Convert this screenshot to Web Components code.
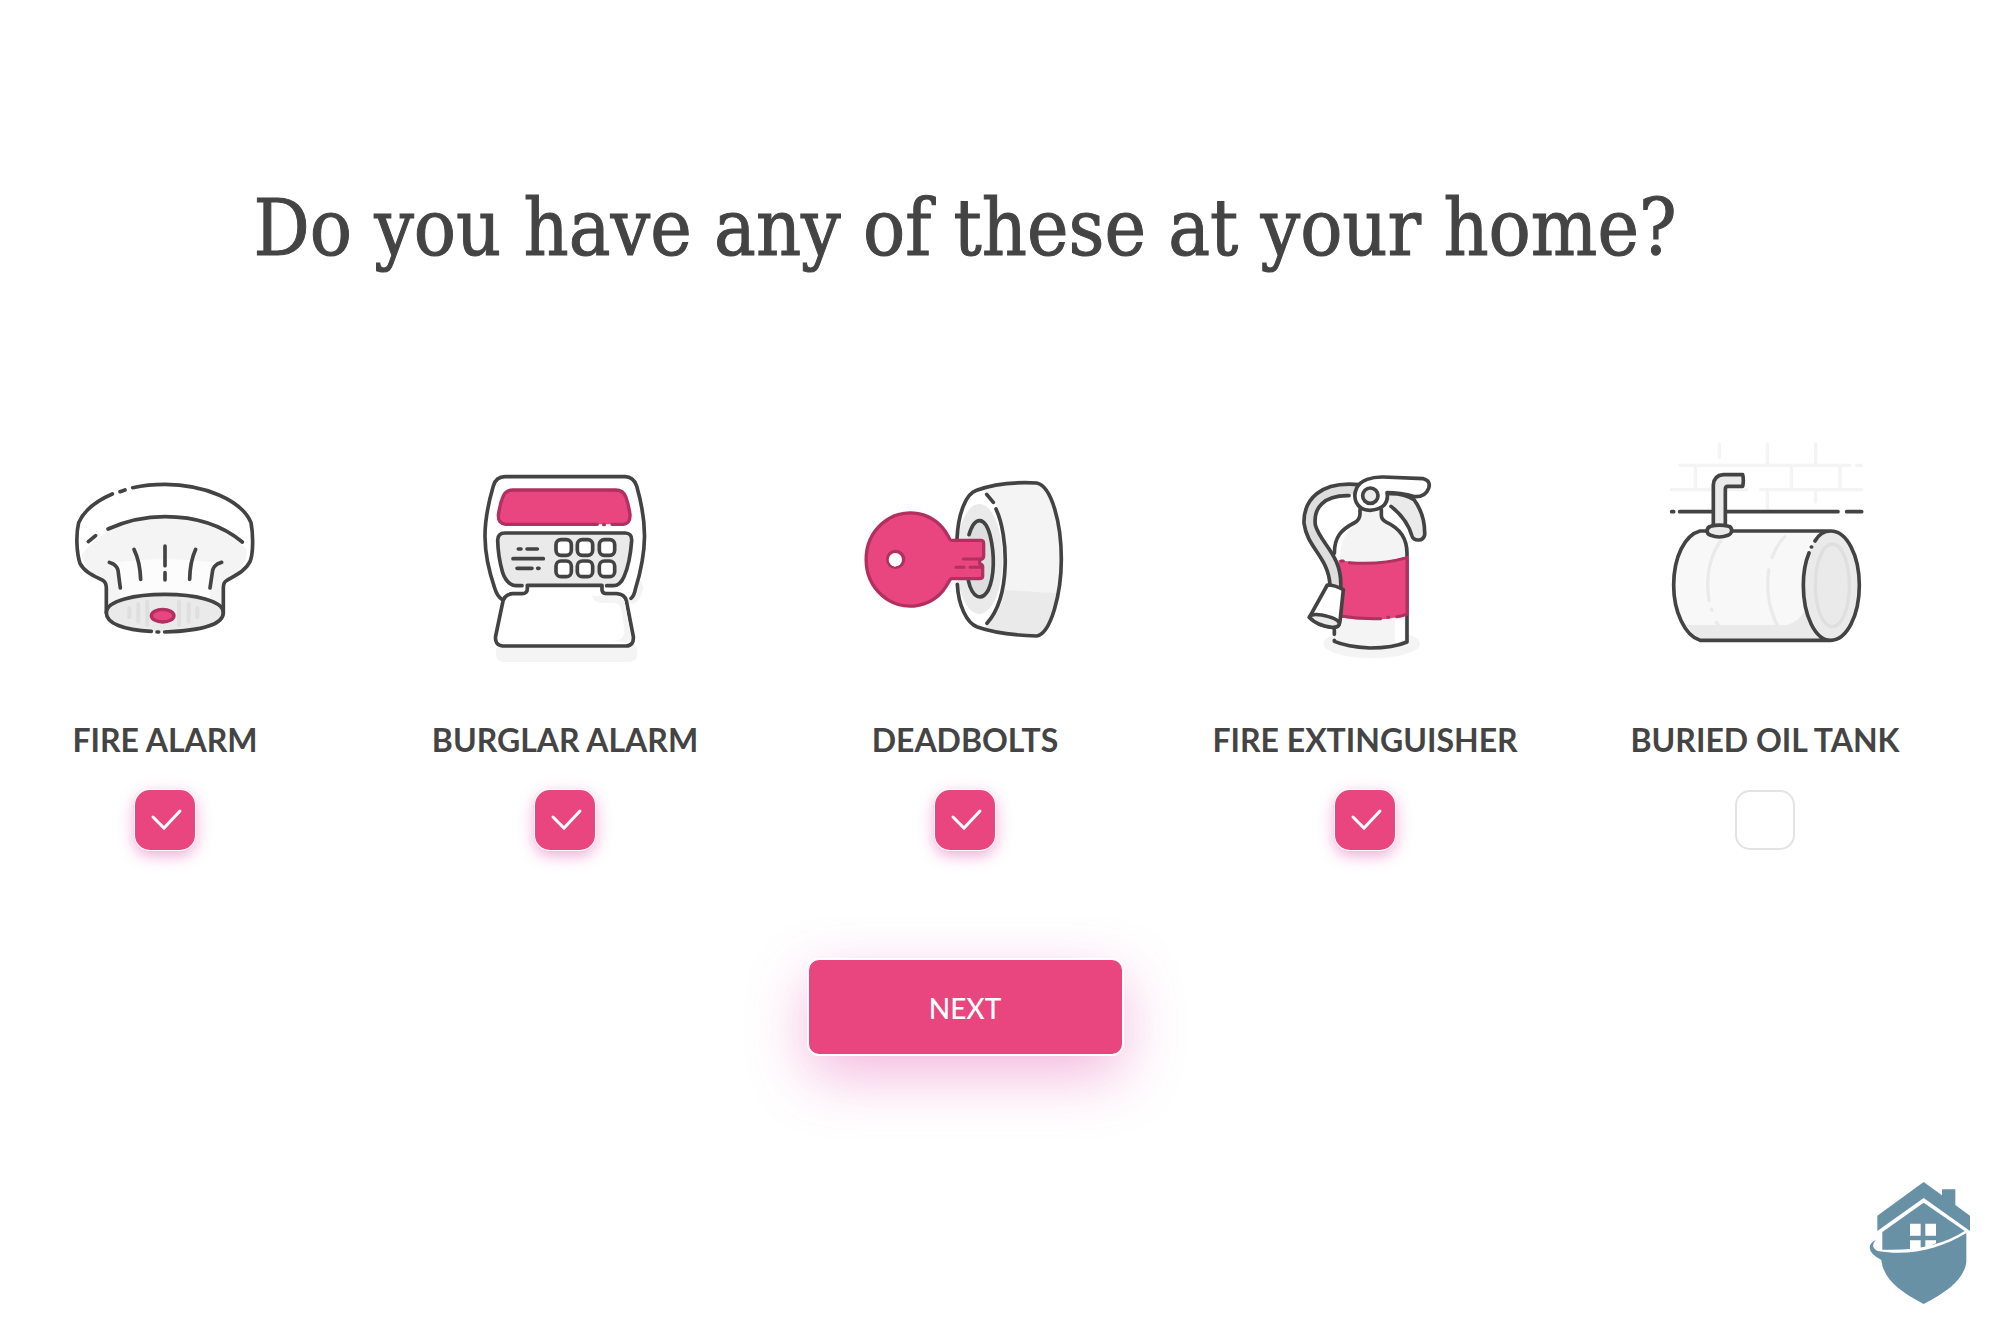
<!DOCTYPE html>
<html lang="en">
<head>
<meta charset="utf-8">
<meta name="viewport" content="width=device-width, initial-scale=1">
<title>Home safety</title>
<style>
  body {
    margin: 0;
    background: #fff;
    color: #444;
    font-family: Lato, "Open Sans", sans-serif;
    --pink: #e9457e;
    --pink-dark: #b2305f;
    --ink: #434343;
    --brand: #6991a6;
  }
</style>
</head>
<body>
<survey-page>
  <span slot="title">Do you have any of these at your home?</span>
  <survey-option checked><item-icon slot="icon" name="fire-alarm"></item-icon>FIRE ALARM</survey-option>
  <survey-option checked><item-icon slot="icon" name="burglar-alarm"></item-icon>BURGLAR ALARM</survey-option>
  <survey-option checked><item-icon slot="icon" name="deadbolt"></item-icon>DEADBOLTS</survey-option>
  <survey-option checked><item-icon slot="icon" name="extinguisher"></item-icon>FIRE EXTINGUISHER</survey-option>
  <survey-option><item-icon slot="icon" name="oil-tank"></item-icon>BURIED OIL TANK</survey-option>
  <next-button slot="action">NEXT</next-button>
  <brand-logo slot="footer"></brand-logo>
</survey-page>

<script>
// Every icon is drawn in a 720 x 720 box
const icons = {
  'fire-alarm': `
    <g transform="translate(45 90)">
      <path class="g1" d="M65 285Q150 170 315 170T560 270Q565 320 495 362Q487 370 487 400V455H142V400Q142 370 135 362Q75 340 65 285Z"/>
      <path class="w" d="M148 310Q310 285 480 310Q450 340 450 415Q310 385 180 415Q180 340 148 310Z" opacity=".7"/>
      <ellipse class="g2" cx="315" cy="459" rx="174" ry="56"/>
      <path class="s3" stroke-width="12" d="M208 445V472M235 432V485M262 425V495M357 425V495M386 432V485M412 445V472"/>
      <path class="l" d="M218 83C250 76 283 73 315 73C430 73 545 120 573 188C580 225 580 280 570 305C555 335 522 348 498 363Q490 368 490 385V458M157 102C110 122 72 152 56 188C47 225 50 280 60 310C74 338 108 350 130 362Q139 368 139 385V458M180 95L195 90"/>
      <path class="l" d="M144 207C200 182 255 170 315 170C410 170 485 195 547 246M85 245L107 227M315 258V317M315 338V360M222 268Q240 305 242 358M407 268Q390 305 389 358M148 307L160 312Q172 320 174 331L181 384M485 307L472 312Q460 320 458 331L450 384"/>
      <path class="l" d="M274 514C190 510 139 490 139 458C139 385 490 385 490 458C490 492 430 512 314 516M291 516H296"/>
      <ellipse class="p" cx="308" cy="467" rx="34" ry="19"/>
    </g>`,
  'burglar-alarm': `
    <g transform="translate(75 90)">
      <rect class="g1" x="78" y="550" width="424" height="56" rx="22"/>
      <path class="g1" d="M400 388H440Q505 420 505 350L520 380Q510 440 475 430Z"/>
      <path class="w l" d="M96 418Q82 410 74 384C35 270 37 190 70 78Q78 50 105 50H465Q490 50 500 78C532 190 532 270 496 388Q492 408 483 415"/>
      <path class="p" d="M382 193H107Q84 190 85 165Q90 130 99 110Q107 90 128 90H437Q460 90 468 112Q476 135 480 163Q482 190 460 193H426M401 194H403"/>
      <path class="g2" d="M105 219H465Q486 219 485 242Q480 310 462 350Q450 377 430 377H140Q110 374 98 338Q84 290 83 240Q84 219 105 219Z"/>
      <path class="l" d="M156 377H138Q110 374 98 338Q84 290 83 240Q84 219 105 219H465Q486 219 485 242Q480 310 462 350Q450 377 430 377H410"/>
      <path class="l" d="M145 267H153M171 267H202M129 296H220M141 325H186M203 325H207"/>
      <g class="w l">
        <rect x="258" y="239" width="46" height="47" rx="15"/><rect x="322" y="239" width="46" height="47" rx="15"/><rect x="388" y="239" width="46" height="47" rx="15"/>
        <rect x="258" y="303" width="46" height="47" rx="15"/><rect x="322" y="303" width="46" height="47" rx="15"/><rect x="388" y="303" width="46" height="47" rx="15"/>
      </g>
      <path class="w l" d="M172 376H396V390Q397 400 408 401H440Q463 402 469 422L490 530Q492 557 468 558H98Q73 555 77 528L98 428Q103 402 128 401H156Q171 400 172 388Z"/>
      <path class="g1" d="M365 407H440Q459 408 464 425L483 535Q482 545 465 548L425 541Q465 545 463 510L455 450Q452 430 430 428H390Q375 428 365 407Z"/>
    </g>`,
  'deadbolt': `
    <g transform="translate(15 90)">
      <path class="g1" d="M375 93Q460 62 562 68C605 78 633 190 633 300C633 400 600 525 560 528Q450 526 375 500Z"/>
      <path class="g2" d="M465 390L622 400Q600 520 560 526Q460 524 400 505Q455 460 465 390Z"/>
      <ellipse class="w" cx="393" cy="297" rx="73" ry="205"/>
      <ellipse class="g2" cx="388" cy="297" rx="70" ry="165"/>
      <ellipse cx="390" cy="298" rx="42" ry="114" fill="#dedede"/>
      <path class="l" d="M321 236C325 155 350 100 380 91C440 68 500 66 560 69C605 78 634 190 634 298C634 400 603 520 560 528Q450 525 382 501C350 490 325 435 322 373M410 103L430 127M438 147C475 225 483 410 411 490"/>
      <path class="l" d="M357 224C375 165 405 170 420 225C435 285 433 350 415 390C395 425 367 415 355 362"/>
      <path class="p" d="M305 241H392Q401 241 401 250V288Q401 298 389 299V311Q400 315 398 325V348Q398 356 388 356H305Q300 357 296 366A132 140 0 1 1 296 231Q300 241 305 241Z"/>
      <circle class="p" cx="137" cy="298" r="24"/>
      <circle class="w" cx="136" cy="299" r="20"/>
      <path class="w" d="M122 314L136 321L138 314Z"/>
      <path d="M340 297H392M318 322H342M360 322H392" fill="none" stroke="var(--pink-dark)" stroke-width="9" stroke-linecap="round"/>
    </g>`,
  'extinguisher': `
    <g transform="translate(105 90)">
      <ellipse class="g1" cx="275" cy="551" rx="145" ry="44"/>
      <path class="g1" d="M240 148H303V165Q302 177 320 187C365 205 380 240 381 270V546Q340 564 270 564Q200 560 163 546V270C165 230 190 205 220 190Q240 177 240 165Z"/>
      <path class="w" d="M171 300V250Q178 210 225 195Q180 225 180 300ZM345 480H373V540L345 550Z"/>
      <path class="l" d="M240 148V162Q240 180 222 189C185 208 163 230 163 280M304 148V165Q304 180 320 187C360 205 381 235 381 280V546Q340 564 270 564Q200 560 163 544V541M163 523V510M381 460V546"/>
      <path class="p0" d="M176 300Q280 320 385 288V465Q280 490 180 472Z"/>
      <path d="M183 303H190M208 308Q300 316 381 293V462Q370 468 350 470M323 472H326M302 476Q240 478 187 469" fill="none" stroke="var(--pink-dark)" stroke-width="9" stroke-linecap="round"/>
      <path d="M228 90C110 75 65 155 100 225C130 280 165 310 166 375" fill="none" stroke="#dedede" stroke-width="30"/>
      <path class="l" d="M238 74C120 62 70 120 72 190C82 265 145 290 150 375M207 107C130 105 100 145 106 195C120 250 188 285 182 384"/>
      <path class="g2 l" d="M322 101Q370 98 402 119C425 150 435 190 434 225Q430 241 414 240Q400 240 396 228C385 190 360 160 333 139"/>
      <path class="w l" d="M230 84C242 60 275 50 310 51L430 56Q453 62 446 85Q436 111 405 110Q360 98 321 98Q330 145 270 151C225 150 218 110 230 84Z"/>
      <circle class="g2 l" cx="271" cy="107" r="23"/>
      <path class="w l" d="M142 375Q165 375 190 389L180 484Q178 502 158 502Q115 497 88 472Z"/>
      <path class="g2 l" d="M88 472Q92 460 125 465Q175 475 178 490Q178 503 155 502Q110 497 88 472Z"/>
    </g>`,
  'oil-tank': `
    <g transform="translate(15 0)">
      <path d="M208 42V82M352 42V104M497 42V104M90 106H598M620 106H634M136 106V178M424 106V178M570 106V178M64 179H290M332 179H635M352 182V236M497 182V216" fill="none" stroke="#f4f4f4" stroke-width="10" stroke-linecap="round"/>
      <path class="l" d="M65 245H71M89 245H564M590 245H635"/>
      <path d="M150 303H542V631H150C100 610 71 545 71 465C71 370 105 315 150 303Z" fill="#f8f8f8"/>
      <path class="g2" d="M110 585H410Q450 575 470 530Q490 600 540 628H150Q125 610 110 585Z"/>
      <path class="s2" stroke-width="10" d="M212 333C175 385 168 450 177 512M184 537L186 541M199 577Q215 605 240 622M404 320Q380 345 366 382M356 420C345 510 370 590 415 622"/>
      <ellipse class="g2" cx="544" cy="466" rx="84" ry="164"/>
      <ellipse class="s3" stroke-width="10" cx="547" cy="466" rx="51" ry="124"/>
      <path class="l" d="M542 303H150C105 315 71 380 71 466C71 545 105 618 150 631H542M495 333Q512 303 542 303C590 303 628 375 628 466C628 557 590 631 542 631C496 631 460 557 460 466Q460 410 477 369M484 351H485"/>
      <path class="l g2" d="M190 288V165Q192 136 220 134H278Q282 151 278 169H233Q226 169 226 178V288Z"/>
      <path class="l g2" d="M182 289Q208 282 236 289Q245 290 245 303Q243 313 234 316Q208 326 182 316Q172 313 171 303Q172 291 182 289Z"/>
    </g>`
};

class ItemIcon extends HTMLElement {
  constructor() {
    super();
    this.attachShadow({ mode: 'open' });
  }

  connectedCallback() {
    this.shadowRoot.innerHTML = `
      <style>
        :host { display: block; }
        svg { display: block; width: 240px; height: 240px; }
        path, ellipse, circle, rect { stroke-linejoin: round; }
        .l { fill: none; stroke: var(--ink); stroke-width: 11; stroke-linecap: round; }
        .w { fill: #fff; }
        .g1 { fill: #f4f4f4; }
        .g2 { fill: #eaeaea; }
        .s2 { fill: none; stroke: #eaeaea; stroke-linecap: round; }
        .s3 { fill: none; stroke: #dfdfdf; stroke-linecap: round; }
        .p0 { fill: var(--pink); }
        .p { fill: var(--pink); stroke: var(--pink-dark); stroke-width: 10; stroke-linecap: round; }
      </style>
      <svg viewBox="0 0 720 720" aria-hidden="true">${icons[this.getAttribute('name')] || ''}</svg>
    `;
  }
}

class SurveyOption extends HTMLElement {
  constructor() {
    super();
    this.attachShadow({ mode: 'open' });
    this.shadowRoot.innerHTML = `
      <style>
        :host { display: block; }
        label {
          display: flex;
          flex-direction: column;
          align-items: center;
          cursor: pointer;
        }
        .name {
          margin: 50px 0 30px;
          font-size: 32px;
          font-weight: 700;
          line-height: 40px;
          text-align: center;
          white-space: nowrap;
        }
        .box { display: grid; }
        .box > * { grid-area: 1 / 1; }
        input {
          appearance: none;
          box-sizing: border-box;
          width: 60px;
          height: 60px;
          margin: 0;
          border: 2px solid #e3e3e3;
          border-radius: 15px;
          background: #fff;
          cursor: pointer;
        }
        input:checked {
          border: 0;
          background: var(--pink);
          box-shadow: 0 0 0 1px #fff, 0 5px 16px rgba(222, 50, 160, 0.45);
        }
        svg {
          width: 60px;
          height: 60px;
          pointer-events: none;
          visibility: hidden;
        }
        input:checked + svg { visibility: visible; }
      </style>
      <label>
        <slot name="icon"></slot>
        <span class="name"><slot></slot></span>
        <span class="box">
          <input type="checkbox">
          <svg viewBox="0 0 60 60" aria-hidden="true">
            <path d="M18 27L29 38L45 21" fill="none" stroke="#fff" stroke-width="3" stroke-linecap="round"/>
          </svg>
        </span>
      </label>
    `;
  }

  connectedCallback() {
    this.shadowRoot.querySelector('input').checked = this.hasAttribute('checked');
  }
}

class NextButton extends HTMLElement {
  constructor() {
    super();
    this.attachShadow({ mode: 'open' });
    this.shadowRoot.innerHTML = `
      <style>
        :host { display: block; }
        button {
          display: block;
          min-width: 313px;
          padding: 31px 48px 29px;
          border: 0;
          border-radius: 10px;
          background: var(--pink);
          box-shadow: 0 0 0 2px #fff, 0 20px 60px rgba(222, 50, 160, 0.36);
          color: #fff;
          font: 500 28px/34px Lato, "Open Sans", sans-serif;
          cursor: pointer;
        }
      </style>
      <button type="button"><slot></slot></button>
    `;
  }
}

class BrandLogo extends HTMLElement {
  constructor() {
    super();
    this.attachShadow({ mode: 'open' });
    this.shadowRoot.innerHTML = `
      <style>
        :host { display: block; }
        svg { display: block; width: 102px; height: 124px; }
      </style>
      <svg viewBox="58 63 306 372" role="img" aria-label="Home shield">
        <g fill="var(--brand)">
          <path d="M83 167L222 66L277 106V88H317V135L361 167V213L222 114L83 213Z"/>
          <path d="M98 216L222 128L345 213Q250 275 98 269Z"/>
          <path d="M95 300Q60 282 60 262Q61 248 78 240Q60 262 84 273C180 290 275 265 350 219V305C345 350 305 390 222 432C140 390 100 350 95 300Z"/>
        </g>
        <path fill="#fff" d="M181 191H213V227H181ZM227 191H259V227H227ZM181 241H213V268H181ZM227 241H259V250L227 264Z"/>
      </svg>
    `;
  }
}

class SurveyPage extends HTMLElement {
  constructor() {
    super();
    this.attachShadow({ mode: 'open' });
    this.shadowRoot.innerHTML = `
      <style>
        :host {
          display: flex;
          flex-direction: column;
          box-sizing: border-box;
          min-height: 100vh;
          padding: 180px 0 28px;
        }
        main {
          display: flex;
          flex-direction: column;
          align-items: center;
          padding: 0 75px 0 5px;
        }
        h1 {
          margin: 0 0 154px;
          font: 400 78px/96px "DejaVu Serif Condensed", "DejaVu Serif", serif;
          text-align: center;
          -webkit-text-stroke: 1px currentColor;
        }
        .options {
          display: grid;
          grid-template-columns: repeat(5, 1fr);
          gap: 80px;
          width: 100%;
          margin-bottom: 110px;
        }
        footer {
          display: flex;
          justify-content: flex-end;
          margin-top: auto;
          padding: 0 29px;
        }
      </style>
      <main>
        <h1><slot name="title"></slot></h1>
        <div class="options"><slot></slot></div>
        <slot name="action"></slot>
      </main>
      <footer><slot name="footer"></slot></footer>
    `;
  }
}

customElements.define('item-icon', ItemIcon);
customElements.define('survey-option', SurveyOption);
customElements.define('next-button', NextButton);
customElements.define('brand-logo', BrandLogo);
customElements.define('survey-page', SurveyPage);
</script>
</body>
</html>
